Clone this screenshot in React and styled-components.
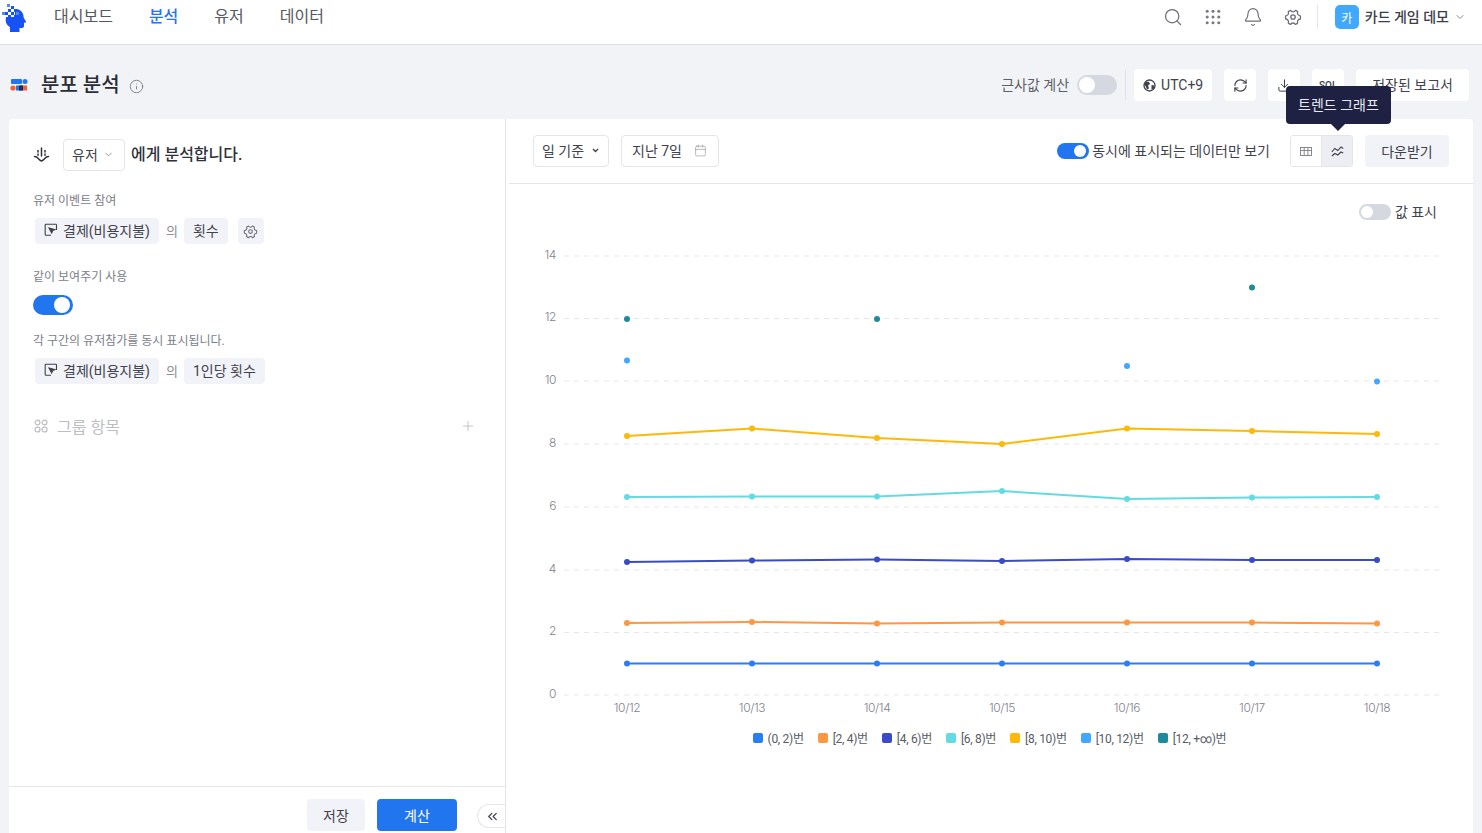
import React from "react";
import styled, { createGlobalStyle } from "styled-components";
import { Search, Bell, ChevronDown, Info, RefreshCw, Download, Plus, ChevronsLeft, Calendar } from "lucide-react";

const Global = createGlobalStyle`
  html, body { margin: 0; padding: 0; height: 100%; overflow: hidden; }
  body { background: #f2f3f6; font-family: Roboto, "Noto Sans CJK KR", "Noto Sans", sans-serif; color: #3a3d4a; }
  * { box-sizing: border-box; }
`;

const Page = styled.div`width: 1482px; height: 833px; display: flex; flex-direction: column; overflow: hidden;`;
const TopBar = styled.header`
  height: 45px; flex: none; background: #fff; border-bottom: 1px solid #dedfe3;
  display: flex; align-items: flex-start; padding: 2px 16px 0 1px;
`;
const Nav = styled.nav`display: flex; gap: 36px; margin-left: 27px; margin-top: 4px;`;
const NavItem = styled.span`
  font-size: 16px; line-height: 22px; color: ${p => (p.$active ? "#2176f0" : "#555862")};
  font-weight: ${p => (p.$active ? 500 : 400)};
`;
const TopRight = styled.div`margin-left: auto; display: flex; align-items: center; height: 28px; margin-top: 1px;`;
const TopIcon = styled.span`width: 20px; height: 20px; margin-left: 20px; display: flex; align-items: center; justify-content: center; color: #6b6e78;`;
const TopDivider = styled.span`width: 1px; height: 24px; background: #e4e5e9; margin: 0 17px 0 14px;`;
const Avatar = styled.span`
  width: 24px; height: 24px; border-radius: 5px; background: #40a9ff; color: #fff; font-size: 12px;
  display: flex; align-items: center; justify-content: center;
`;
const Project = styled.span`font-size: 14px; font-weight: 500; color: #3a3d4a; margin: 0 0 3px 6px;`;
const ProjectChevron = styled(ChevronDown)`margin-left: 5px; color: #8a8d96;`;

const SubBar = styled.div`height: 74px; flex: none; display: flex; align-items: center; padding: 6px 13px 0 10px;`;
const Title = styled.h1`font-size: 20px; line-height: 28px; font-weight: 500; color: #2b2d36; margin: 0 0 0 13px;`;
const InfoIcon = styled(Info)`margin-left: 9px; color: #7d8089; margin-top: 2px;`;
const SubRight = styled.div`margin-left: auto; display: flex; align-items: center;`;
const MutedLabel = styled.span`font-size: 14px; color: #5c5f6a; margin: 0 8px 2px 0;`;
const Toggle = styled.span`
  display: inline-flex; flex: none; align-items: center; border-radius: 999px;
  width: ${p => p.$w}px; height: ${p => p.$h}px; padding: 2px;
  background: ${p => (p.$on ? "#2176f0" : "#d5d8e1")};
  justify-content: ${p => (p.$on ? "flex-end" : "flex-start")};
  &::after { content: ""; display: block; background: #fff; border-radius: 50%;
    width: ${p => p.$h - 4}px; height: ${p => p.$h - 4}px; margin: ${p => (p.$on ? "0 1px 0 0" : "0")}; }
`;
const SubDivider = styled.span`width: 1px; height: 30px; background: #e2e3e8; margin: 0 8px;`;
const WhiteBtn = styled.span`
  height: 32px; min-width: 32px; padding: 0 ${p => p.$pad ?? 0}px ${p => p.$up ?? 0}px; margin-left: ${p => p.$ml ?? 12}px; background: #fff; border-radius: 4px;
  display: flex; align-items: center; justify-content: center; gap: 5px; font-size: 14px; color: #3f424d; flex: none;
`;
const SqlText = styled.span`font-size: 10px; font-weight: 500;`;

const Main = styled.div`flex: 1; display: flex; padding: 0 9px; min-height: 0;`;
const LeftPanel = styled.aside`
  width: 497px; flex: none; background: #fff; border-right: 1px solid #e4e5e9; display: flex; flex-direction: column;
  border-radius: 4px 0 0 0;
`;
const LeftBody = styled.div`flex: 1; padding: 20px 29px 0 24px;`;
const Sentence = styled.div`display: flex; align-items: center; height: 32px;`;
const SentenceText = styled.span`font-size: 16px; color: #2f313b; font-weight: 500; margin-bottom: 4px;`;
const SelectBox = styled.span`
  height: 32px; display: inline-flex; align-items: center; border: 1px solid #e4e5e9; border-radius: 4px;
  font-size: 14px; color: #3f424d; font-weight: 400; background: #fff; flex: none;
  width: ${p => p.$w}px; padding: 0 0 2px 8px; gap: ${p => p.$gap ?? 6}px;
  margin: ${p => p.$m ?? "0"};
`;
const FieldLabel = styled.div`font-size: 12px; line-height: 18px; color: #7b7e88; margin-top: ${p => p.$mt}px;`;
const ChipRow = styled.div`display: flex; align-items: center; margin: 8px 0 0 2px; font-size: 14px; color: #8a8d96;`;
const Chip = styled.span`
  height: 26px; padding: 0 9px 2px; background: #f2f3f8; border-radius: 4px; color: #3f424d;
  display: inline-flex; align-items: center; gap: 5px; font-size: 14px; flex: none;
`;
const Of = styled.span`margin: 0 6px 2px 7px; font-size: 13px;`;
const GearChip = styled(Chip)`margin-left: 10px; width: 26px; justify-content: center; padding: 0; color: #6b6e78;`;
const SwitchLine = styled.div`margin-top: 9px; height: 20px; display: flex;`;
const GroupRow = styled.div`display: flex; align-items: center; margin-top: 30px; color: #bcbec4; font-size: 16px; height: 24px; padding-left: 1px;`;
const GroupText = styled.span`margin-left: 9px; flex: 1;`;
const LeftFooter = styled.div`
  height: 47px; flex: none; border-top: 1px solid #e6e7eb; display: flex; align-items: flex-start; justify-content: flex-end;
  padding-top: 12px;
`;
const Btn = styled.span`
  height: 32px; width: ${p => p.$w}px; margin-right: ${p => p.$mr}px; border-radius: 4px; font-size: 14px; flex: none;
  background: ${p => (p.$primary ? "#2176f0" : "#f2f3f8")}; color: ${p => (p.$primary ? "#fff" : "#3f424d")};
  display: flex; align-items: center; justify-content: center;
`;
const Collapse = styled.span`
  width: 28px; height: 24px; margin-top: 5px; border: 1px solid #e4e5e9; border-right: 0; border-radius: 12px 0 0 12px;
  display: flex; align-items: center; justify-content: center; color: #3f424d; padding-left: 2px;
`;

const RightPanel = styled.section`flex: 1; background: #fff; display: flex; flex-direction: column; border-radius: 0 4px 0 0; min-width: 0;`;
const Toolbar = styled.div`
  height: 65px; flex: none; margin-left: 3px; border-bottom: 1px solid #e4e5e9; padding: 16px 24px 0 24px;
  display: flex; align-items: flex-start; position: relative;
`;
const DateSel = styled(SelectBox)`margin-left: 12px; padding-left: 10px; gap: 12px;`;
const ToolRight = styled.div`margin-left: auto; display: flex; align-items: center; height: 32px;`;
const ToggleText = styled.span`font-size: 14px; color: #3f424d; margin: 0 0 2px 3px;`;
const Segment = styled.span`
  display: flex; margin-left: 20px; width: 63px; height: 32px; border: 1px solid #e4e5e9; border-radius: 3px; overflow: hidden;
`;
const SegBtn = styled.span`
  flex: 1; display: flex; align-items: center; justify-content: center; color: #666a75;
  background: ${p => (p.$on ? "#eceef3" : "#fff")};
  border-left: ${p => (p.$on ? "1px solid #e4e5e9" : "0")};
`;
const DownBtn = styled(Btn)`margin-left: 12px;`;
const Tooltip = styled.div`
  position: absolute; right: 82px; top: -33px; height: 38px; width: 105px; background: #1e2142; color: #e9eaf0; border-radius: 4px;
  font-size: 14px; display: flex; align-items: center; justify-content: center; z-index: 5; white-space: nowrap; padding-bottom: 2px;
  &::after { content: ""; position: absolute; left: 45px; top: 38px; border: 7px solid transparent; border-top-color: #1e2142; border-bottom: 0; }
`;
const ValueRow = styled.div`display: flex; justify-content: flex-end; align-items: center; gap: 4px; padding: 18px 36px 0 0; height: 38px; font-size: 14px; color: #3f424d; flex: none;`;
const ValueText = styled.span`margin-bottom: 3px;`;
const ChartSvg = styled.svg`display: block; flex: none; margin-top: 18px;`;
const AxisText = styled.text`font-family: Inter, sans-serif; font-size: 12px; font-weight: 300; letter-spacing: -0.4px; fill: #7f828e;`;
const Legend = styled.div`display: flex; justify-content: center; gap: 14px; margin-top: 10px; height: 16px; align-items: center;`;
const LegendItem = styled.span`display: flex; align-items: center; gap: 5px; font-size: 12px; color: #585b66; letter-spacing: -0.3px;`;
const LegendText = styled.span`margin-bottom: 2px;`;
const Swatch = styled.i`width: 10px; height: 10px; border-radius: 2px; background: ${p => p.$c}; display: block;`;

const xs = [627, 752, 877, 1002, 1127, 1252, 1377];
const dates = ["10/12", "10/13", "10/14", "10/15", "10/16", "10/17", "10/18"];
const ticks = [[14, 256], [12, 318.5], [10, 381], [8, 444], [6, 507], [4, 570], [2, 632.5], [0, 695]];
const lines = [
  { c: "#2a7ef5", y: [663.5, 663.5, 663.5, 663.5, 663.5, 663.5, 663.5] },
  { c: "#ff9640", y: [623, 622, 623.5, 622.5, 622.5, 622.5, 623.5] },
  { c: "#3a4bc8", y: [562, 560.5, 559.5, 561, 559, 560, 560] },
  { c: "#63dbe2", y: [497, 496.5, 496.5, 491, 499, 497.5, 497] },
  { c: "#fdb907", y: [436, 428.5, 438, 444, 428.5, 431, 434] },
];
const dots = [
  { c: "#40a9ff", x: 627, y: 360.5 }, { c: "#40a9ff", x: 1127, y: 366 }, { c: "#40a9ff", x: 1377, y: 381.5 },
  { c: "#1f8a9c", x: 627, y: 319 }, { c: "#1f8a9c", x: 877, y: 319 }, { c: "#1f8a9c", x: 1252, y: 287.5 },
];
const legend = [
  ["#2a7ef5", "(0, 2)번"], ["#ff9640", "[2, 4)번"], ["#3a4bc8", "[4, 6)번"], ["#63dbe2", "[6, 8)번"],
  ["#fdb907", "[8, 10)번"], ["#40a9ff", "[10, 12)번"], ["#1f8a9c", "[12, +∞)번"],
];

const Logo = () => (
  <svg width="26" height="30" viewBox="0 0 26 30">
    <path d="M11 7.500c5-1.300 10 .6 11.300 5.500.3 1.100.3 2 .4 2.800l2.300 3.700c.3.500.1.900-.5 1l-1.500.3v3.300c0 1.200-.8 1.900-2 1.900h-2.500V30H9v-4.700c-3.300-2-4.600-5-4.300-8.300.1-1 .3-1.800.7-2.500z" fill="#1652f5"/>
    <rect x="4" y="5" width="10" height="10" fill="#fff" transform="rotate(0)"/>
    {[[7,7],[10,4],[13,7],[10,10],[7,13],[13,13],[4,10],[1,10],[6,2],[15,10]].map(([x,y],i)=>(
      <rect key={i} x={x} y={y} width="3" height="3" fill={i > 6 ? "#4d8bff" : "#1652f5"}/>
    ))}
  </svg>
);
const AppsIcon = () => (
  <svg width="16" height="16" viewBox="0 0 18 18" fill="#777a84">
    {[2.5,9,15.5].flatMap(y=>[2.5,9,15.5].map(x=><circle key={x+"-"+y} cx={x} cy={y} r="1.700"/>))}
  </svg>
);
const GearIcon = ({ size, color }) => (
  <svg width={size} height={size} viewBox="0 0 18 18" fill="none" stroke={color} strokeWidth="1.300" strokeLinejoin="round">
    <path d="M6.700 2.400c.4.900 1.200 1.400 2.300 1.400s1.900-.5 2.300-1.400c.9.300 1.700.8 2.400 1.400-.4 1-.3 1.900.2 2.700s1.300 1.200 2.400 1.300c.2.900.2 2.300 0 3.200-1.100.1-1.900.5-2.400 1.300s-.6 1.700-.2 2.700c-.7.600-1.500 1.100-2.400 1.400-.4-.9-1.200-1.400-2.300-1.400s-1.900.5-2.300 1.400c-.9-.3-1.700-.8-2.400-1.400.4-1 .3-1.900-.2-2.700s-1.300-1.200-2.400-1.300c-.2-.9-.2-2.300 0-3.200 1.100-.1 1.900-.5 2.400-1.300s.6-1.700.2-2.700c.7-.6 1.500-1.100 2.400-1.400z"/>
    <circle cx="9" cy="9" r="2.200"/>
  </svg>
);
const TitleIcon = () => (
  <svg width="18" height="14" viewBox="0 0 18 14">
    <rect x="1" y="1" width="11" height="5" rx="1" fill="#2176f0"/>
    <circle cx="15" cy="3.500" r="2.500" fill="#2176f0"/>
    <circle cx="3" cy="10" r="2.600" fill="#f0613a"/>
    <rect x="6" y="7.500" width="7" height="5" fill="#2176f0"/>
    <rect x="9" y="7.500" width="4" height="5" fill="#1c2a55"/>
    <rect x="13" y="7.500" width="4" height="5" fill="#f0613a"/>
  </svg>
);
const GlobeIcon = () => (
  <svg width="13" height="13" viewBox="0 0 13 13">
    <circle cx="6.500" cy="6.500" r="5.500" fill="none" stroke="#3f424d" strokeWidth="1.300"/>
    <path d="M3 2.500l3 .5 1 2-2 1.500 1 3-2 1-1.500-3.500-1.500-1.500zM8.500 6l3 .5-1 3.500-2 1z" fill="#3f424d"/>
  </svg>
);
const EventIcon = () => (
  <svg width="14" height="14" viewBox="0 0 14 14" fill="none" stroke="#3f424d" strokeWidth="1.100">
    <path d="M12.500 7V2a.8.8 0 0 0-.8-.8H2A.8.8 0 0 0 1.200 2v9.500a.8.8 0 0 0 .8.8h5"/>
    <path d="M5 5l6 1.600-2.300 1-1 2.400z" fill="#3f424d"/>
  </svg>
);
const PeopleIcon = () => (
  <svg width="17" height="16" viewBox="0 0 17 16" fill="none" stroke="#2f313b" strokeWidth="1.500" strokeLinecap="round" strokeLinejoin="round">
    <path d="M8.500 1v8M5 3.500v1.500M5 7v1.200M12 3.500v1.500M12 7v1.200"/>
    <path d="M1.500 9.500c2 0 3 1 4 2.200 1 1.100 2 1.800 3 2.300 1-.5 2-1.200 3-2.300 1-1.200 2-2.200 4-2.200"/>
  </svg>
);
const GroupIcon = () => (
  <svg width="14" height="14" viewBox="0 0 14 14" fill="none" stroke="#bcbec4" strokeWidth="1.200">
    <circle cx="3.500" cy="3.500" r="2.400"/><circle cx="10.500" cy="3.500" r="2.400"/>
    <rect x="1.100" y="8.100" width="4.800" height="4.800" rx="2"/><rect x="8.100" y="8.100" width="4.800" height="4.800" rx="2"/>
  </svg>
);
const TableIcon = () => (
  <svg width="12" height="9" viewBox="0 0 12 9" fill="none" stroke="#7a7d88" strokeWidth=".9">
    <rect x=".5" y=".5" width="11" height="8"/><path d="M.5 3.500h11M4.200 .5v8M7.900 .5v8"/>
  </svg>
);
const TrendIcon = () => (
  <svg width="13" height="11" viewBox="0 0 13 11" fill="none" stroke="#3f424d" strokeWidth="1.100">
    <path d="M.8 6l3-3.500 3 2 3.200-3.500 2.200 1.500"/><path d="M.8 10l3-2.500 3 1.500 3.200-3 2.200 1"/>
  </svg>
);
const Caret = () => (
  <svg width="7" height="5" viewBox="0 0 7 5"><path d="M1 1l2.500 2.500L6 1" fill="none" stroke="#3f424d" strokeWidth="1.400"/></svg>
);

export default function App() {
  return (
    <Page>
      <Global />
      <TopBar>
        <Logo />
        <Nav>
          <NavItem>대시보드</NavItem>
          <NavItem $active>분석</NavItem>
          <NavItem>유저</NavItem>
          <NavItem>데이터</NavItem>
        </Nav>
        <TopRight>
          <TopIcon><Search size={20} strokeWidth={1.5} /></TopIcon>
          <TopIcon><AppsIcon /></TopIcon>
          <TopIcon><Bell size={20} strokeWidth={1.4} /></TopIcon>
          <TopIcon><GearIcon size={18} color="#6b6e78" /></TopIcon>
          <TopDivider />
          <Avatar>카</Avatar>
          <Project>카드 게임 데모</Project>
          <ProjectChevron size={12} />
        </TopRight>
      </TopBar>
      <SubBar>
        <TitleIcon />
        <Title>분포 분석</Title>
        <InfoIcon size={15} strokeWidth={1.5} />
        <SubRight>
          <MutedLabel>근사값 계산</MutedLabel>
          <Toggle $w={40} $h={20} />
          <SubDivider />
          <WhiteBtn $pad={9} $ml={0}><GlobeIcon />UTC+9</WhiteBtn>
          <WhiteBtn><RefreshCw size={15} strokeWidth={1.8} /></WhiteBtn>
          <WhiteBtn><Download size={15} strokeWidth={1.6} /></WhiteBtn>
          <WhiteBtn><SqlText>SQL</SqlText></WhiteBtn>
          <WhiteBtn $pad={16} $up={2}>저장된 보고서</WhiteBtn>
        </SubRight>
      </SubBar>
      <Main>
        <LeftPanel>
          <LeftBody>
            <Sentence>
              <PeopleIcon />
              <SelectBox $w={62} $gap={5} $m="0 6px 0 13px">유저 <ChevronDown size={11} color="#8a8d96" /></SelectBox>
              <SentenceText>에게 분석합니다.</SentenceText>
            </Sentence>
            <FieldLabel $mt={21}>유저 이벤트 참여</FieldLabel>
            <ChipRow>
              <Chip><EventIcon />결제(비용지불)</Chip>
              <Of>의</Of>
              <Chip>횟수</Chip>
              <GearChip><GearIcon size={15} color="#6b6e78" /></GearChip>
            </ChipRow>
            <FieldLabel $mt={24}>같이 보여주기 사용</FieldLabel>
            <SwitchLine><Toggle $on $w={40} $h={20} /></SwitchLine>
            <FieldLabel $mt={17}>각 구간의 유저참가를 동시 표시됩니다.</FieldLabel>
            <ChipRow>
              <Chip><EventIcon />결제(비용지불)</Chip>
              <Of>의</Of>
              <Chip>1인당 횟수</Chip>
            </ChipRow>
            <GroupRow>
              <GroupIcon />
              <GroupText>그룹 항목</GroupText>
              <Plus size={16} strokeWidth={1.3} />
            </GroupRow>
          </LeftBody>
          <LeftFooter>
            <Btn $w={58} $mr={12}>저장</Btn>
            <Btn $primary $w={80} $mr={20}>계산</Btn>
            <Collapse><ChevronsLeft size={15} strokeWidth={2} /></Collapse>
          </LeftFooter>
        </LeftPanel>
        <RightPanel>
          <Toolbar>
            <SelectBox $w={76} $gap={8}>일 기준 <Caret /></SelectBox>
            <DateSel $w={98}>지난 7일 <Calendar size={13} strokeWidth={1.1} color="#8a8d96" /></DateSel>
            <ToolRight>
              <Toggle $on $w={32} $h={16} />
              <ToggleText>동시에 표시되는 데이터만 보기</ToggleText>
              <Segment>
                <SegBtn><TableIcon /></SegBtn>
                <SegBtn $on><TrendIcon /></SegBtn>
              </Segment>
              <DownBtn $w={84} $mr={0}>다운받기</DownBtn>
            </ToolRight>
            <Tooltip>트렌드 그래프</Tooltip>
          </Toolbar>
          <ValueRow><Toggle $w={32} $h={16} /><ValueText>값 표시</ValueText></ValueRow>
          <ChartSvg width="967" height="480" viewBox="506 240 967 480">
            {ticks.map(([v, y]) => (
              <g key={v}>
                <line x1="564" x2="1440" y1={y} y2={y} stroke="#e6e7ec" strokeDasharray="5 5" />
                <AxisText x="556" y={y + 2.5} textAnchor="end">{v}</AxisText>
              </g>
            ))}
            {dates.map((d, i) => (
              <AxisText key={d} x={xs[i]} y="712" textAnchor="middle">{d}</AxisText>
            ))}
            {lines.map(l => (
              <g key={l.c}>
                <polyline points={l.y.map((y, i) => `${xs[i]},${y}`).join(" ")} fill="none" stroke={l.c} strokeWidth="2" />
                {l.y.map((y, i) => <circle key={i} cx={xs[i]} cy={y} r="3" fill={l.c} />)}
              </g>
            ))}
            {dots.map(d => <circle key={d.c + d.x} cx={d.x} cy={d.y} r="3" fill={d.c} />)}
          </ChartSvg>
          <Legend>
            {legend.map(([c, t]) => (
              <LegendItem key={t}><Swatch $c={c} /><LegendText>{t}</LegendText></LegendItem>
            ))}
          </Legend>
        </RightPanel>
      </Main>
    </Page>
  );
}
